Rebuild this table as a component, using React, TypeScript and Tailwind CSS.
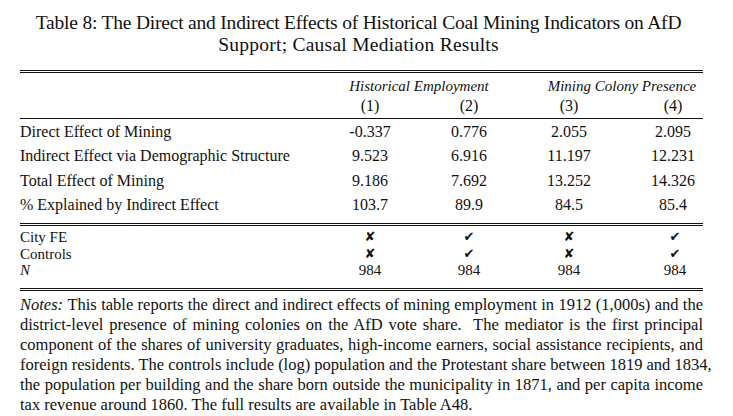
import React from "react";

const ROWS = [
  ["Direct Effect of Mining", "-0.337", "0.776", "2.055", "2.095"],
  ["Indirect Effect via Demographic Structure", "9.523", "6.916", "11.197", "12.231"],
  ["Total Effect of Mining", "9.186", "7.692", "13.252", "14.326"],
  ["% Explained by Indirect Effect", "103.7", "89.9", "84.5", "85.4"],
];

const YES = "\u2714";
const NO = "\u2718";

const CHECKS = [
  { label: "City FE", vals: [NO, YES, NO, YES] },
  { label: "Controls", vals: [NO, YES, NO, YES] },
];

const NOTES = [
  "This table reports the direct and indirect effects of mining employment in 1912 (1,000s) and the",
  "district-level presence of mining colonies on the AfD vote share.  The mediator is the first principal",
  "component of the shares of university graduates, high-income earners, social assistance recipients, and",
  "foreign residents. The controls include (log) population and the Protestant share between 1819 and 1834,",
  "the population per building and the share born outside the municipality in 1871, and per capita income",
  "tax revenue around 1860. The full results are available in Table A48.",
];

const GRID = "grid grid-cols-[300px_100px_98px_102px_83px]";

function DoubleRule() {
  return <div className="h-[3px] border-y border-[#111]" />;
}

export default function App() {
  return (
    <div className="w-[733px] h-[416px] overflow-hidden bg-white text-[#111] font-['Liberation_Serif',serif]">
      {/* title */}
      <div className="pt-[12px] pl-[20px] pr-[36px] text-center text-[19.5px] leading-[22px]">
        <div className="tracking-[-0.2px] whitespace-nowrap">
          Table 8: The Direct and Indirect Effects of Historical Coal Mining Indicators on AfD
        </div>
        <div className="tracking-[0.25px]">Support; Causal Mediation Results</div>
      </div>

      <div className="mx-[20px] w-[683px] mt-[14px]">
        <DoubleRule />

        {/* column headers */}
        <div className={`${GRID} mt-[3px] h-[20px] text-[15px] leading-[20px] italic`}>
          <div />
          <div className="col-span-2 text-center">Historical Employment</div>
          <div className="col-span-2 pl-[23px] text-center">Mining Colony Presence</div>
        </div>
        <div className={`${GRID} h-[20px] text-[16px] leading-[20px]`}>
          <div />
          <div className="text-center">(1)</div>
          <div className="text-center">(2)</div>
          <div className="text-center">(3)</div>
          <div className="pl-[23px] text-center">(4)</div>
        </div>
        <div className="mt-[2px] border-t border-[#111]" />

        {/* estimates */}
        <div className="h-[104px] pt-[1px] text-[16px] leading-[24.4px]">
          {ROWS.map((r) => (
            <div key={r[0]} className={GRID}>
              <div className="whitespace-nowrap">{r[0]}</div>
              <div className="text-center">{r[1]}</div>
              <div className="text-center">{r[2]}</div>
              <div className="text-center">{r[3]}</div>
              <div className="pl-[23px] text-center">{r[4]}</div>
            </div>
          ))}
        </div>

        <DoubleRule />

        {/* specification rows */}
        <div className="h-[62px] pt-[3px] text-[15px] leading-[16.7px]">
          {CHECKS.map((c) => (
            <div key={c.label} className={GRID}>
              <div>{c.label}</div>
              {c.vals.map((v, i) => (
                <div
                  key={i}
                  className={`text-center font-['DejaVu_Sans',sans-serif] text-[13px] ${i === 3 ? "pl-[27px]" : ""}`}
                >
                  {v}
                </div>
              ))}
            </div>
          ))}
          <div className={GRID}>
            <div className="italic">N</div>
            <div className="text-center">984</div>
            <div className="text-center">984</div>
            <div className="text-center">984</div>
            <div className="pl-[27px] text-center">984</div>
          </div>
        </div>

        <DoubleRule />

        {/* notes */}
        <div className="mt-[4px] text-[16.5px] leading-[20px]">
          {NOTES.map((line, i) => (
            <div
              key={i}
              className={`whitespace-pre ${i < NOTES.length - 1 ? "text-justify [text-align-last:justify]" : ""}`}
            >
              {i === 0 && <span className="italic">Notes: </span>}
              {line}
            </div>
          ))}
        </div>
      </div>
    </div>
  );
}
